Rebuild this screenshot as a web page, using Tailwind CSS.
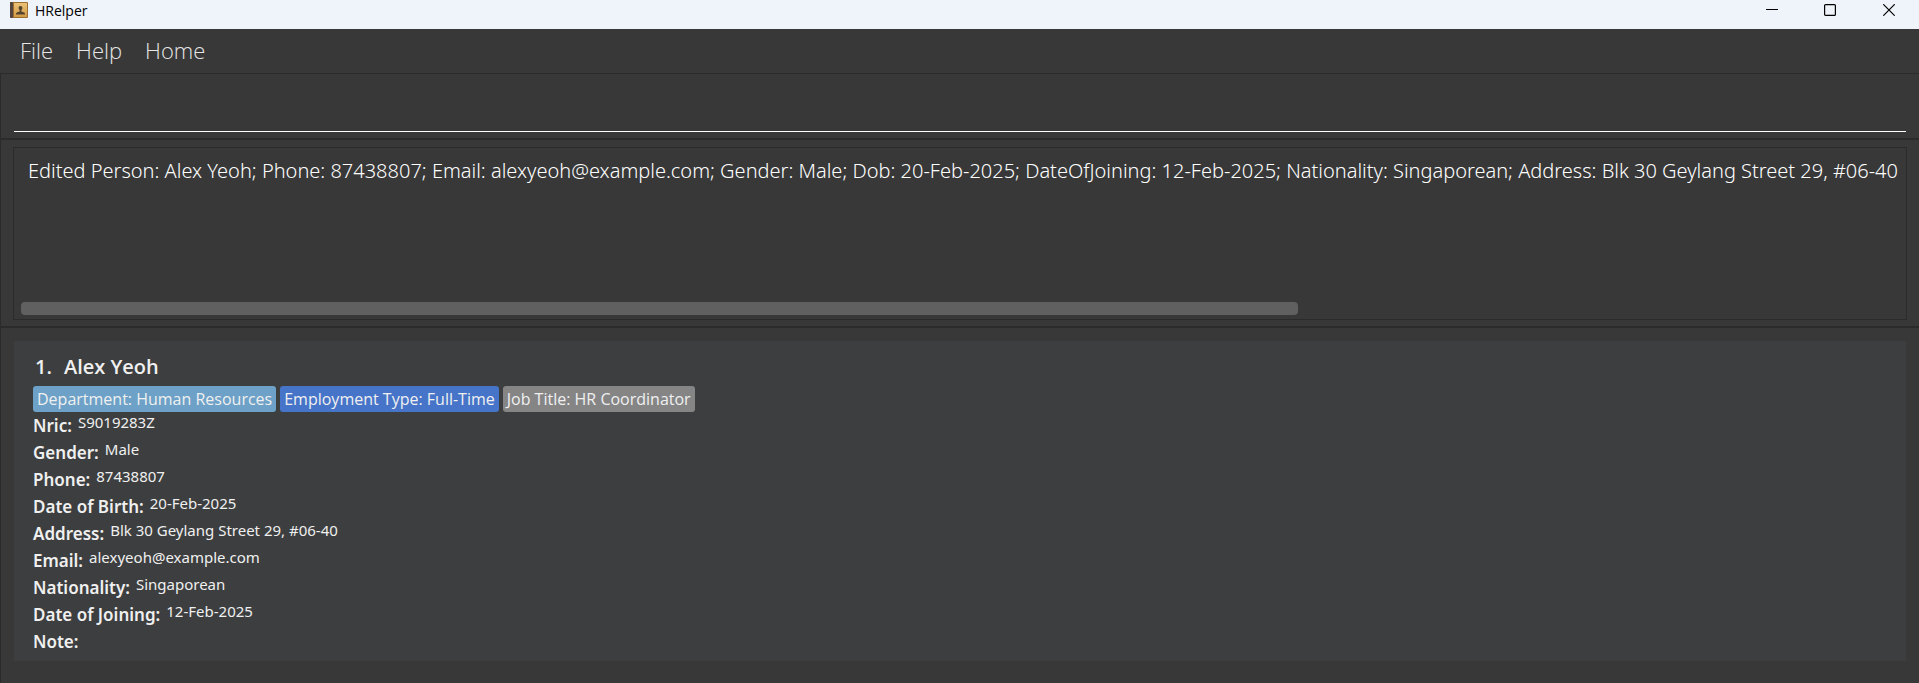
<!DOCTYPE html>
<html lang="en">
<head>
<meta charset="utf-8">
<title>HRelper</title>
<script src="https://cdn.jsdelivr.net/npm/@tailwindcss/browser@4"></script>
</head>
<body class="flex min-h-screen flex-col bg-[#383838] font-['Noto_Sans','Open_Sans',sans-serif] text-[#f0f0f0]">
  <header class="flex h-[29px] items-start justify-between bg-[#eff3fa] text-black">
    <div class="flex items-center gap-[7px] pl-[10px]">
      <svg class="h-5 w-[18px]" viewBox="0 0 18 20" aria-hidden="true">
        <defs>
          <linearGradient id="cover" x1="0" y1="0" x2="0" y2="1"><stop offset="0" stop-color="#edc277"/><stop offset="1" stop-color="#d09a45"/></linearGradient>
        </defs>
        <rect x="0" y="1" width="18" height="16" rx="1" fill="#9c6f31"/>
        <rect x="4" y="2" width="13" height="14" fill="url(#cover)"/>
        <rect x="0" y="1" width="3" height="16" rx="1" fill="#54443f"/>
        <path d="M10.500 5c1.200 0 1.900.8 1.900 2 0 .9-.4 1.500-1 2v1.500c.6.500 3.600.5 3.600 2.500v.5H6V13c0-2 3-2 3.600-2.500V9c-.6-.5-1-1.100-1-2 0-1.200.7-2 1.900-2z" fill="#54432e"/>
      </svg>
      <h1 class="font-['Open_Sans',sans-serif] text-[14px] leading-[22px]">HRelper</h1>
    </div>
    <div class="flex">
      <button type="button" aria-label="Minimize" class="flex h-5 w-[58px] items-center justify-center">
        <svg class="h-3 w-3" viewBox="0 0 12 12"><path d="M0 5.500H12" stroke="#000" fill="none"/></svg>
      </button>
      <button type="button" aria-label="Maximize" class="flex h-5 w-[58px] items-center justify-center">
        <svg class="h-3 w-3" viewBox="0 0 12 12"><rect x=".6" y=".6" width="10.800" height="10.800" rx="1" stroke="#000" stroke-width="1.200" fill="none"/></svg>
      </button>
      <button type="button" aria-label="Close" class="flex h-5 w-[60px] items-center justify-center">
        <svg class="h-3 w-3" viewBox="0 0 12 12"><path d="M.3.3 11.700 11.700M11.700.3.3 11.700" stroke="#000" stroke-width="1.200" fill="none"/></svg>
      </button>
    </div>
  </header>

  <nav class="flex h-11 items-center gap-[23px] pb-[2px] pl-5 font-['Open_Sans',sans-serif] text-[22px] font-light text-[#e6e6e6]">
    <button type="button">File</button>
    <button type="button">Help</button>
    <button type="button">Home</button>
  </nav>

  <main class="flex flex-1 flex-col border-l border-[#2b2b2b]">
    <section class="border-y border-[#2b2b2b] px-[13px] pt-2 pb-[6px]">
      <input type="text" aria-label="Command" class="block h-[50px] w-full border-b border-white bg-transparent px-3 text-[22px] font-light outline-none">
    </section>

    <section class="border-y border-[#2b2b2b] px-3 pt-[7px] pb-[6px]">
      <div class="flex flex-col border border-[#2b2b2b] px-[7px] pb-1">
        <textarea readonly rows="1" aria-label="Result" class="-mr-[6px] block h-[154px] resize-none overflow-hidden bg-transparent px-[7px] pt-[9px] text-[20px] leading-[28px] font-light whitespace-pre text-white outline-none">Edited Person: Alex Yeoh; Phone: 87438807; Email: alexyeoh@example.com; Gender: Male; Dob: 20-Feb-2025; DateOfJoining: 12-Feb-2025; Nationality: Singaporean; Address: Blk 30 Geylang Street 29, #06-40</textarea>
        <div class="h-[13px] w-[68%] rounded-[4px] bg-[#606060]"></div>
      </div>
    </section>

    <section class="flex-1 border-t border-[#2b2b2b] px-[13px] pt-[13px] pb-[22px]">
      <article class="bg-[#3c3e3f] px-[19px] pt-[11px] pb-[6px]">
        <h2 class="flex gap-3 pl-[2px] font-['Open_Sans',sans-serif] text-[20px] leading-[30px] font-semibold"><span>1.</span><span>Alex Yeoh</span></h2>
        <ul class="mt-1 flex gap-1 font-['Open_Sans',sans-serif] text-[16px] leading-[26px] font-medium">
          <li class="rounded-[3px] bg-[#6da1c7] px-1">Department: Human Resources</li>
          <li class="rounded-[3px] bg-[#4674c9] px-1">Employment Type: Full-Time</li>
          <li class="rounded-[3px] bg-[#858585] px-1">Job Title: HR Coordinator</li>
        </ul>
        <dl class="leading-[27px]">
          <div class="flex h-[27px] gap-[6px]"><dt class="text-[17px] font-semibold">Nric:</dt><dd class="-mt-[3px] text-[15px]">S9019283Z</dd></div>
          <div class="flex h-[27px] gap-[6px]"><dt class="text-[17px] font-semibold">Gender:</dt><dd class="-mt-[3px] text-[15px]">Male</dd></div>
          <div class="flex h-[27px] gap-[6px]"><dt class="text-[17px] font-semibold">Phone:</dt><dd class="-mt-[3px] text-[15px]">87438807</dd></div>
          <div class="flex h-[27px] gap-[6px]"><dt class="text-[17px] font-semibold">Date of Birth:</dt><dd class="-mt-[3px] text-[15px]">20-Feb-2025</dd></div>
          <div class="flex h-[27px] gap-[6px]"><dt class="text-[17px] font-semibold">Address:</dt><dd class="-mt-[3px] text-[15px]">Blk 30 Geylang Street 29, #06-40</dd></div>
          <div class="flex h-[27px] gap-[6px]"><dt class="text-[17px] font-semibold">Email:</dt><dd class="-mt-[3px] text-[15px]">alexyeoh@example.com</dd></div>
          <div class="flex h-[27px] gap-[6px]"><dt class="text-[17px] font-semibold">Nationality:</dt><dd class="-mt-[3px] text-[15px]">Singaporean</dd></div>
          <div class="flex h-[27px] gap-[6px]"><dt class="text-[17px] font-semibold">Date of Joining:</dt><dd class="-mt-[3px] text-[15px]">12-Feb-2025</dd></div>
          <div class="flex h-[27px] gap-[6px]"><dt class="text-[17px] font-semibold">Note:</dt><dd></dd></div>
        </dl>
      </article>
    </section>
  </main>
</body>
</html>
